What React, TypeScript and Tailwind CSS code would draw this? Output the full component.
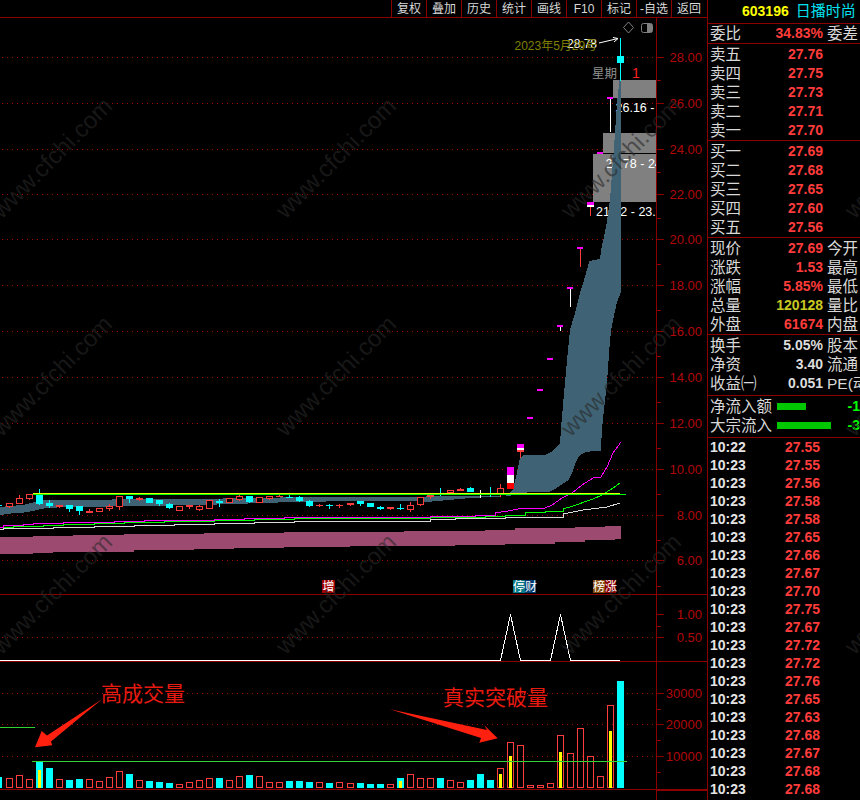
const X = (i: number) => Math.round(8.5 + 10.03 * i);

type Candle = [number, number, number, number, number, 'h' | 'r' | 'c' | 'w'];
// index, bodyTop, bodyBottom, wickTop, wickBottom, kind
const candles: Candle[] = [
  [-1, 505, 506, 505, 506, 'c'],
  [0, 503, 507, 503, 508, 'h'],
  [1, 498, 504, 495, 504, 'h'],
  [2, 494, 499, 494, 500, 'h'],
  [3, 493, 504, 489, 505, 'c'],
  [4, 503, 506, 500, 508, 'c'],
  [5, 505, 507, 505, 508, 'r'],
  [6, 505, 509, 505, 512, 'c'],
  [7, 506, 511, 506, 515, 'c'],
  [8, 511, 513, 509, 513, 'r'],
  [9, 508, 512, 508, 512, 'h'],
  [10, 506, 509, 504, 511, 'h'],
  [11, 496, 507, 496, 510, 'h'],
  [12, 496, 499, 496, 503, 'c'],
  [13, 498, 500, 497, 501, 'r'],
  [14, 498, 503, 498, 503, 'c'],
  [15, 500, 504, 500, 506, 'c'],
  [16, 504, 508, 503, 509, 'c'],
  [17, 506, 511, 506, 511, 'h'],
  [18, 505, 507, 505, 509, 'r'],
  [19, 506, 510, 505, 511, 'h'],
  [20, 500, 509, 500, 509, 'h'],
  [21, 501, 503, 499, 507, 'c'],
  [22, 498, 503, 498, 503, 'h'],
  [23, 496, 500, 495, 501, 'h'],
  [24, 496, 502, 496, 503, 'c'],
  [25, 497, 503, 497, 503, 'h'],
  [26, 496, 499, 496, 500, 'h'],
  [27, 496, 497, 494, 497, 'r'],
  [28, 497, 498, 495, 498, 'c'],
  [29, 497, 501, 496, 502, 'c'],
  [30, 501, 506, 500, 507, 'c'],
  [31, 505, 506, 504, 507, 'r'],
  [32, 505, 506, 504, 509, 'c'],
  [33, 505, 506, 504, 508, 'r'],
  [34, 503, 505, 503, 506, 'r'],
  [35, 501, 504, 501, 506, 'c'],
  [36, 503, 507, 503, 507, 'c'],
  [37, 507, 509, 506, 510, 'c'],
  [38, 507, 509, 507, 510, 'r'],
  [39, 508, 509, 504, 510, 'c'],
  [40, 505, 510, 502, 512, 'h'],
  [41, 497, 505, 497, 506, 'h'],
  [42, 495, 497, 495, 499, 'r'],
  [43, 496, 496, 488, 496, 'c'],
  [44, 490, 493, 490, 493, 'h'],
  [45, 489, 491, 488, 491, 'r'],
  [46, 488, 492, 487, 492, 'c'],
  [47, 490, 490, 490, 498, 'w'],
  [48, 487, 487, 487, 497, 'c'],
  [49, 488, 494, 484, 497, 'h'],
];

const volumes: [number, number, number][] = [
  [-1, 11, 0], [0, 10, 0], [1, 13, 0], [2, 9, 0], [3, 26, 18], [4, 20, 0], [5, 9, 0], [6, 8, 0], [7, 9, 0],
  [8, 9, 0], [9, 7, 0], [10, 11, 0], [11, 17, 0], [12, 14, 0], [13, 8, 0], [14, 7, 0], [15, 6, 0], [16, 5, 0],
  [17, 4, 0], [18, 6, 0], [19, 8, 0], [20, 10, 0], [21, 10, 0], [22, 8, 0], [23, 12, 0], [24, 13, 0], [25, 12, 0],
  [26, 6, 0], [27, 6, 0], [28, 7, 0], [29, 7, 0], [30, 6, 0], [31, 6, 0], [32, 5, 0], [33, 6, 0], [34, 5, 0],
  [35, 5, 0], [36, 4, 0], [37, 4, 0], [38, 4, 0], [39, 10, 7], [40, 14, 0], [41, 10, 0], [42, 10, 0], [43, 10, 0],
  [44, 8, 0], [45, 6, 0], [46, 8, 0], [47, 14, 0], [48, 8, 0], [49, 20, 14], [50, 46, 32], [51, 43, 0], [52, 3, 0],
  [53, 3, 0], [54, 5, 0], [55, 53, 36], [56, 35, 0], [57, 60, 0], [58, 32, 0], [59, 12, 0], [60, 83, 57], [61, 107, 0],
];
const cyanVols = new Set([-1, 3, 4, 6, 7, 12, 14, 15, 16, 21, 24, 28, 29, 30, 32, 35, 36, 37, 39, 43, 46, 47, 48, 61]);

const cloud =
  '0,507 13,505.7 23,505 30,503.3 42,500 100,500 124,499 200,499 233,498.3 267,498 300,496.7 385,497.5 447,496 505,496 513,490 516,477 520,458 523,455 545,455 552,451.7 560,443 561.7,420 563,405 565,383 568.3,346.7 570,330 575,313 580,293 585,276.7 589.3,261 600,259 601.7,246.7 604,236.7 606.7,223 610,200 613.3,157 617.3,100 619.5,80 621,80 621,291.7 616.7,303 611.7,326.7 610,340 606.7,386.7 605,400 603.3,416 601.7,433 601,450.7 587,451.7 580,455 576.7,460 573.3,470 568.3,480 558.3,487 550,491.7 513.3,493 510,496 498,496.7 470,498 430,501.7 385,500.7 290,502 273,502.7 233,504 200,505 134,506 100,506.7 47,507.7 33,511 23,512.7 13,513.3 0,515';

const steps = (pts: number[][]) => {
  const out: string[] = [];
  pts.forEach((p, i) => {
    if (i > 0) out.push(`${p[0]},${pts[i - 1][1]}`);
    out.push(`${p[0]},${p[1]}`);
  });
  return out.join(' ');
};

const bandTop = [[0, 537], [33, 536], [73, 535], [124, 534], [204, 533], [284, 532], [404, 531], [485, 530], [515, 528], [575, 527], [605, 526], [621, 526]];
const bandBottom = [[0, 554], [33, 553], [53, 552], [134, 550], [194, 549], [234, 548], [284, 547], [350, 546], [455, 545], [505, 544], [555, 542], [585, 540], [615, 539], [621, 539]];
const band = `${steps(bandTop)} ${steps(bandBottom).split(' ').reverse().join(' ')}`;

const magenta = `${steps([[0, 527], [3, 525], [23, 524], [33, 523], [63, 522], [114, 521], [144, 520], [214, 519], [244, 518], [284, 517], [430, 516], [475, 515], [495, 513]])} 508,511 518,509 545,508 552,505 562,498 572,493 582,485 593,478 601,477 607,467 613,453 621,442`;
const green = `${steps([[0, 527], [13, 526], [43, 525], [63, 524], [94, 523], [124, 522], [164, 521], [214, 520], [254, 519], [294, 518], [430, 517], [485, 516], [505, 515], [525, 512], [545, 511], [563, 509]])} 573,506 593,499 602,495 613,488 620,483`;
const whiteLine = `${steps([[0, 529], [3, 528], [53, 527], [94, 526], [134, 525], [174, 524], [214, 523], [254, 522], [294, 521], [430, 519], [455, 518], [505, 517], [563, 514]])} 583,510 607,507 620,503`;

const dots = (y: number) => <line key={y} x1={2} x2={656} y1={y + 0.5} y2={y + 0.5} stroke="#a80000" strokeDasharray="1 4" />;
const red = '#ff3c3c';
const axis = '#8c0000';
const axisText = '#b00808';

const mainAxis = [
  [57, '28.00'], [103, '26.00'], [149, '24.00'], [194, '22.00'], [239, '20.00'], [285, '18.00'],
  [331, '16.00'], [377, '14.00'], [423, '12.00'], [469, '10.00'], [515, '8.00'], [560, '6.00'],
] as [number, string][];

function AxisLabel({ y, t }: { y: number; t: string }) {
  return (
    <>
      <rect x={657} y={y} width={7} height={1} fill={axis} />
      <text x={702} y={y + 5} textAnchor="end" fontSize={13} fill={axisText}>{t}</text>
    </>
  );
}

function CandleMark({ c }: { c: Candle }) {
  const [i, t, b, wt, wb, k] = c;
  const x = X(i);
  const col = k === 'c' ? '#00ffff' : k === 'w' ? '#ffffff' : red;
  return (
    <>
      <rect x={x} y={wt} width={1} height={Math.max(wb - wt, 1)} fill={col} />
      {k === 'h' ? (
        <rect x={x - 2.5} y={t + 0.5} width={6} height={Math.max(b - t - 1, 1)} fill="#000" stroke={col} />
      ) : b > t ? (
        <rect x={x - 3} y={t} width={7} height={b - t} fill={col} />
      ) : null}
    </>
  );
}

function MainPane() {
  const caps: [number, number, number, string][] = [
    [530, 418, 418, '#fff'], [540, 390, 390, '#fff'], [550, 359, 359, '#fff'],
    [560, 326, 331, '#fff'], [570, 288, 307, '#fff'], [580, 248, 267, red], [600, 153, 153, '#fff'], [610, 98, 132, '#fff'],
  ];
  return (
    <div className="h-[577px] border-b border-[#8c0000]">
      <svg width="707" height="576" viewBox="0 18 707 576" className="block">
        <g shapeRendering="crispEdges">
          {mainAxis.map(([y]) => dots(y))}
          <polygon points={band} fill="#9c4a70" />
          <rect x={593} y={154} width={63} height={48} fill="#808080" />
          <rect x={603} y={133} width={53} height={20} fill="#808080" />
          <rect x={613} y={80} width={43} height={18} fill="#808080" />
        </g>
        <g fontSize={12.5} fill="#ffffff">
          <svg x={0} y={18} width={656} height={576} viewBox="0 18 656 576" overflow="hidden">
            <text x={615.5} y={112}>26.16 - 28.78</text>
            <text x={605.5} y={168}>21.78 - 24.30</text>
            <text x={596} y={216}>21.12 - 23.70</text>
          </svg>
        </g>
        <g shapeRendering="crispEdges">
          <polygon points={cloud} fill="#3f6374" />
          {candles.map(c => <CandleMark key={c[0]} c={c} />)}
          <polyline points={whiteLine} fill="none" stroke="#d8d8d8" />
          <polyline points={green} fill="none" stroke="#00ff00" />
          <polyline points={magenta} fill="none" stroke="#ff00ff" />
          <rect x={33} y={493} width={587} height={1} fill="#e8ff00" />
          <rect x={33} y={494} width={593} height={1} fill="#00ff00" />
          {/* limit-up bars */}
          <rect x={507} y={467} width={7} height={8} fill="#ff00ff" />
          <rect x={507} y={475} width={7} height={8} fill="#ffffff" />
          <rect x={507} y={483} width={7} height={6} fill="#ff0000" />
          <rect x={517} y={444} width={7} height={4} fill="#ff00ff" />
          <rect x={517} y={448} width={7} height={2} fill="#ffffff" />
          <rect x={517} y={450} width={7} height={2} fill={red} />
          <rect x={520} y={452} width={1} height={6} fill={red} />
          <rect x={587} y={202} width={7} height={3} fill="#ff00ff" />
          <rect x={587} y={205} width={7} height={2} fill="#ffffff" />
          <rect x={590} y={207} width={1} height={9} fill={red} />
          {caps.map(([x, t, b, col]) => (
            <g key={x}>
              {b > t && <rect x={x} y={t} width={1} height={b - t} fill={col} />}
              <rect x={x - 3} y={t - 1} width={6} height={2} fill="#ff00ff" />
            </g>
          ))}
          <rect x={620} y={38} width={1} height={43} fill="#00ffff" />
          <rect x={617} y={56} width={7} height={7} fill="#00ffff" />
        </g>
        <text x={567} y={48} fontSize={12} fill="#ffffff">28.78</text>
        <text x={514.5} y={50} fontSize={12} fill="#808000">2023年5月29号</text>
        <path d="M599 43 L618 38.5 M613 37.5 L618 38.5 L614 42" fill="none" stroke="#ffffff" />
        <text x={592} y={78} fontSize={12.5} fill="#909090">星期</text>
        <text x={632} y={78} fontSize={14} fill="#ff2020">1</text>
        <path d="M628.5 22 L633.5 27.5 L628.5 33 L623.5 27.5 Z" fill="none" stroke="#808080" />
        <rect x={641.5} y={23.5} width={11} height={9} rx={2} fill="none" stroke="#808080" />
        <rect x={647} y={24} width={5} height={8} fill="#808080" />
        <g shapeRendering="crispEdges">
          <line x1={656.5} x2={656.5} y1={18} y2={594} stroke={axis} />
          {Array.from({ length: 12 }, (_, i) => 80 + i * 46).map(y => (
            <rect key={y} x={657} y={y} width={4} height={1} fill={axis} />
          ))}
        </g>
        {mainAxis.map(([y, t]) => <AxisLabel key={t} y={y} t={t} />)}
        <g fontSize={12} fill="#ffffff">
          <rect x={322} y={580} width={13} height={13} fill="#a00000" />
          <text x={322.5} y={591}>增</text>
          <rect x={513} y={580} width={12} height={13} fill="#0a7a88" />
          <rect x={525} y={580} width={11} height={13} fill="#003a70" />
          <text x={513} y={591}>停财</text>
          <rect x={593} y={580} width={12} height={13} fill="#84480a" />
          <rect x={605} y={580} width={11} height={13} fill="#8c0000" />
          <text x={593} y={591}>榜涨</text>
        </g>
      </svg>
    </div>
  );
}

function SubPane() {
  return (
    <div className="h-[67px] border-b border-[#8c0000]">
      <svg width="707" height="66" viewBox="0 595 707 66" className="block">
        <g shapeRendering="crispEdges">
          {dots(637)}
          <line x1={656.5} x2={656.5} y1={595} y2={661} stroke={axis} />
          <rect x={657} y={626} width={4} height={1} fill={axis} />
          <polyline points="0,660.5 500.5,660.5 510.5,614.5 520.5,660.5 550.5,660.5 560.5,614.5 570.5,660.5 620,660.5" fill="none" stroke="#ffffff" strokeWidth={1} />
        </g>
        <AxisLabel y={614} t="1.00" />
        <AxisLabel y={637} t="0.50" />
      </svg>
    </div>
  );
}

function VolumePane() {
  return (
    <div className="h-[128px] border-b border-[#8c0000]">
      <svg width="707" height="127" viewBox="0 662 707 127" className="block">
        <g shapeRendering="crispEdges">
          {[693, 724, 756].map(dots)}
          <line x1={656.5} x2={656.5} y1={662} y2={789} stroke={axis} />
          {[709, 740, 772].map(y => <rect key={y} x={657} y={y} width={4} height={1} fill={axis} />)}
          {volumes.map(([i, h, inner]) => {
            const x = X(i);
            const cyan = cyanVols.has(i);
            return (
              <g key={i}>
                {cyan ? (
                  <rect x={x - 3} y={788 - h} width={7} height={h} fill="#00ffff" />
                ) : (
                  <rect x={x - 2.5} y={788.5 - h} width={6} height={h - 1} fill="none" stroke={red} />
                )}
                {inner > 0 && <rect x={x - 1} y={788 - inner} width={3} height={inner} fill="#ffff00" />}
              </g>
            );
          })}
          <rect x={0} y={727} width={35} height={1} fill="#32d232" />
          <rect x={32} y={761} width={595} height={1} fill="#32d232" />
        </g>
        <AxisLabel y={693} t="30000" />
        <AxisLabel y={724} t="20000" />
        <AxisLabel y={756} t="10000" />
        <polygon points="35,747.3 41.7,731 47,735.5 102,699.3 51,741.5 52.3,745.3" fill="#ff2010" />
        <polygon points="497.7,738.3 484.3,725.3 487,730 390,709.3 481,738 479.3,742.7" fill="#ff2010" />
        <text x={101} y={701} fontSize={21} fill="#e81a10">高成交量</text>
        <text x={443} y={705} fontSize={21} fill="#e81a10">真实突破量</text>
      </svg>
    </div>
  );
}

const asks = [['卖五', '27.76'], ['卖四', '27.75'], ['卖三', '27.73'], ['卖二', '27.71'], ['卖一', '27.70']];
const bids = [['买一', '27.69'], ['买二', '27.68'], ['买三', '27.65'], ['买四', '27.60'], ['买五', '27.56']];
const quote = [
  ['现价', '27.69', '今开', 'r'], ['涨跌', '1.53', '最高', 'r'], ['涨幅', '5.85%', '最低', 'r'],
  ['总量', '120128', '量比', 'y'], ['外盘', '61674', '内盘', 'r'],
];
const fund = [['换手', '5.05%', '股本'], ['净资', '3.40', '流通'], ['收益㈠', '0.051', 'PE(动']];
const ticks = ['27.55', '27.55', '27.56', '27.58', '27.58', '27.65', '27.66', '27.67', '27.70', '27.75', '27.67', '27.72', '27.72', '27.76', '27.65', '27.63', '27.68', '27.67', '27.68', '27.68'];

function Row({ label, value, side, tone = 'r' }: { label: string; value: string; side?: string; tone?: string }) {
  const color = tone === 'r' ? 'text-[#ff3c3c]' : tone === 'y' ? 'text-[#c8c820]' : 'text-[#dcdcdc]';
  return (
    <div className="flex h-[19px] items-center">
      <div className="flex w-[115px] shrink-0 items-center justify-between pl-[2px]">
        <span className="whitespace-nowrap text-[15.5px] text-[#d8d8d8]">{label}</span>
        <span className={`text-[14px] font-bold ${color}`}>{value}</span>
      </div>
      {side && <span className="ml-[4px] shrink-0 whitespace-nowrap text-[15.5px] text-[#d8d8d8]">{side}</span>}
    </div>
  );
}

function Flow({ label, bar, value }: { label: string; bar: string; value: string }) {
  return (
    <div className="flex h-[19px] items-center">
      <span className="w-[70px] whitespace-nowrap pl-[2px] text-[15.5px] text-[#d8d8d8]">{label}</span>
      <div className="w-[71px]"><div className={`h-[7px] bg-[#00c800] ${bar}`} /></div>
      <span className="text-[14px] font-bold text-[#00ff00]">{value}</span>
    </div>
  );
}

const toolbar = ['复权', '叠加', '历史', '统计', '画线', 'F10', '标记', '-自选', '返回'];

const marks = [
  [52, 158], [336, 158], [621, 158], [905, 158],
  [52, 376], [336, 376], [621, 376], [905, 376],
  [52, 594], [336, 594], [621, 594], [905, 594],
];

export default function App() {
  return (
    <div className="relative flex h-[800px] w-[860px] overflow-hidden bg-black [font-family:'Liberation_Sans','Noto_Sans_CJK_SC',sans-serif]">
      <div className="h-[800px] w-[708px] shrink-0 border-r border-[#8c0000]">
        <div className="flex h-[18px] items-center justify-end border-b border-[#8c0000] pr-[1px]">
          {toolbar.map(t => (
            <div key={t} className="flex h-[17px] w-[35px] items-center justify-center border-l border-[#8c0000] text-[12px] text-[#d8d8d8]">
              {t}
            </div>
          ))}
        </div>
        <MainPane />
        <SubPane />
        <VolumePane />
        <div className="ml-[656px] h-[10px] border-l border-t border-[#8c0000]" />
      </div>

      <div className="w-[152px] shrink-0">
        <div className="flex h-[24px] items-center border-b border-[#8c0000] pl-[34px]">
          <span className="text-[14px] font-bold text-[#ffff00]">603196</span>
          <span className="ml-[7px] whitespace-nowrap text-[15px] text-[#00e0f0]">日播时尚</span>
        </div>
        <div className="h-[20px] border-b border-[#8c0000]">
          <Row label="委比" value="34.83%" side="委差" />
        </div>
        <div className="h-[97px] border-b border-[#8c0000] pt-[1px]">
          {asks.map(([l, v]) => <Row key={l} label={l} value={v} />)}
        </div>
        <div className="h-[97px] border-b border-[#8c0000] pt-[1px]">
          {bids.map(([l, v]) => <Row key={l} label={l} value={v} />)}
        </div>
        <div className="h-[97px] border-b border-[#8c0000] pt-[1px]">
          {quote.map(([l, v, s, t]) => <Row key={l} label={l} value={v} side={s} tone={t} />)}
        </div>
        <div className="h-[61px] border-b border-[#8c0000] pt-[1px]">
          {fund.map(([l, v, s]) => <Row key={l} label={l} value={v} side={s} tone="w" />)}
        </div>
        <div className="h-[42px] border-b border-[#8c0000] pt-[1px]">
          <Flow label="净流入额" bar="w-[29px]" value="-1" />
          <Flow label="大宗流入" bar="w-[54px]" value="-3" />
        </div>
        <div>
          {ticks.map((p, i) => (
            <div key={i} className="flex h-[18px] items-center pl-[2px] text-[14px] font-bold">
              <span className="w-[75px] text-[#e4e4e4]">{i === 0 ? '10:22' : '10:23'}</span>
              <span className="text-[#ff3c3c]">{p}</span>
            </div>
          ))}
        </div>
      </div>

      <div className="pointer-events-none absolute inset-0 overflow-hidden">
        {marks.map(([x, y]) => (
          <span
            key={`${x}-${y}`}
            style={{ left: x, top: y }}
            className="absolute -translate-x-1/2 -translate-y-1/2 -rotate-45 whitespace-nowrap text-[24px] text-[#28282899]"
          >
            www.cfchi.com
          </span>
        ))}
      </div>
    </div>
  );
}
